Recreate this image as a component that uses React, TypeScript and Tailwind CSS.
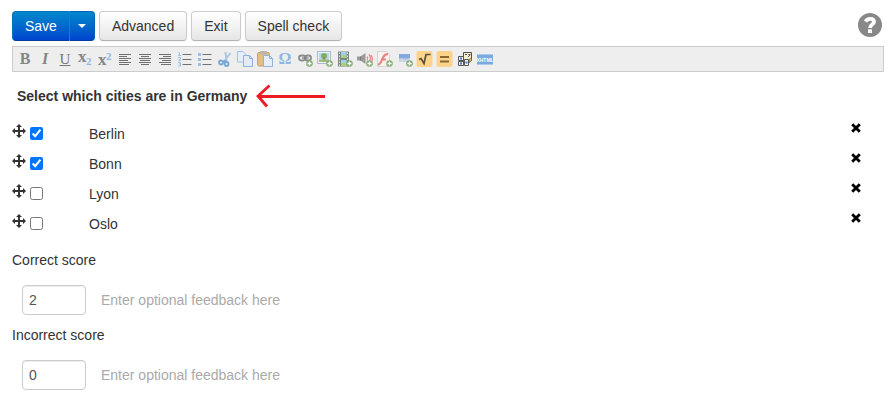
import { ReactNode } from 'react';

const cities = [
  { name: 'Berlin', correct: true },
  { name: 'Bonn', correct: true },
  { name: 'Lyon', correct: false },
  { name: 'Oslo', correct: false },
];

const scores = [
  { id: 'correct', label: 'Correct score', value: '2' },
  { id: 'incorrect', label: 'Incorrect score', value: '0' },
];

const Icon = ({ children }: { children: ReactNode }) => (
  <svg viewBox="0 0 16 16" width="16" height="16" fill="none" className="block overflow-visible">
    {children}
  </svg>
);

const Plus = () => (
  <g>
    <circle cx="12.5" cy="12.5" r="3.3" fill="#86ad70" />
    <path d="M10.5 12.5h4M12.5 10.5v4" stroke="#fff" strokeWidth="1.3" />
  </g>
);

const Glyph = ({ className, children }: { className: string; children: ReactNode }) => (
  <span className={`block w-4 text-center font-['Liberation_Serif',serif] leading-4 ${className}`}>{children}</span>
);

const Script = ({ baseY, markY }: { baseY: number; markY: number }) => (
  <Icon>
    <g fontFamily="Liberation Serif, serif" fontWeight="700">
      <text x="1" y={baseY} fontSize="17" fill="#858585">
        x
      </text>
      <text x="9" y={markY} fontSize="11" fill="#8fb7e6">
        2
      </text>
    </g>
  </Icon>
);

const Lines = ({ rows }: { rows: [number, number][] }) => (
  <Icon>
    {rows.map(([x, w], i) => (
      <rect key={i} x={x} y={3 + i * 2} width={w} height="1" fill="#707070" />
    ))}
  </Icon>
);

const tools: { label: string; icon: ReactNode }[] = [
  { label: 'Bold', icon: <Glyph className="text-[16px] font-bold text-[#858585]">B</Glyph> },
  { label: 'Italic', icon: <Glyph className="text-[16px] font-bold text-[#858585] italic">I</Glyph> },
  { label: 'Underline', icon: <Glyph className="text-[15px] text-[#757575] underline">U</Glyph> },
  { label: 'Subscript', icon: <Script baseY={11} markY={14} /> },
  { label: 'Superscript', icon: <Script baseY={14} markY={9} /> },
  { label: 'Align left', icon: <Lines rows={[[2, 12], [2, 8], [2, 12], [2, 9], [2, 12], [2, 10]]} /> },
  { label: 'Align center', icon: <Lines rows={[[2, 12], [4, 8], [2, 12], [3, 10], [2, 12], [4, 8]]} /> },
  { label: 'Align right', icon: <Lines rows={[[2, 12], [6, 8], [2, 12], [5, 9], [2, 12], [4, 10]]} /> },
  {
    label: 'Numbered list',
    icon: (
      <Icon>
        <path d="M1.5 1.5h1v3M1 4.5h3M1 6.5h2.5V8l-2 1.5H4M1 11.5h2.5V15H1M2 13h1.5" stroke="#9cc0ea" />
        <path d="M5.5 3.5h9M5.5 8.5h9M5.5 13.5h9" stroke="#707070" />
      </Icon>
    ),
  },
  {
    label: 'Bulleted list',
    icon: (
      <Icon>
        <path d="M1 2h3v3H1zM1 7h3v3H1zM1 12h3v3H1z" fill="#9cc0ea" />
        <path d="M5.5 3.5h9M5.5 8.5h9M5.5 13.5h9" stroke="#707070" />
      </Icon>
    ),
  },
  {
    label: 'Cut',
    icon: (
      <Icon>
        <path d="M8.5 1 9.5 10M13.5 2 7 10.5" stroke="#a9c9e0" strokeWidth="2" />
        <circle cx="4" cy="11.5" r="2" stroke="#76a7d0" strokeWidth="1.8" />
        <circle cx="9.5" cy="13" r="2" stroke="#76a7d0" strokeWidth="1.8" />
        <path d="M6 10.5 9.5 10" stroke="#76a7d0" strokeWidth="2" />
      </Icon>
    ),
  },
  {
    label: 'Copy',
    icon: (
      <Icon>
        <path d="M.5.5H6l3 3V11H.5z" fill="#e6eff9" stroke="#a3bfe2" />
        <path d="M6.5 4.500h6l3 3v8h-9z" fill="#e1ecf8" stroke="#8fb1dd" />
        <path d="M12.5 4.500v3h3" stroke="#8fb1dd" />
      </Icon>
    ),
  },
  {
    label: 'Paste',
    icon: (
      <Icon>
        <rect x=".5" y="1.5" width="12" height="13.5" rx="1.5" fill="#e3bd84" stroke="#cda268" />
        <rect x="3" y="0" width="7" height="3.5" rx="1" fill="#b9b4ac" />
        <path d="M6.5 4.500h6l3 3v8h-9z" fill="#e6eff9" stroke="#93b2da" />
        <path d="M12.5 4.500v3h3" stroke="#93b2da" />
      </Icon>
    ),
  },
  { label: 'Special character', icon: <Glyph className="text-[16px] font-bold text-[#8fb4e6]">Ω</Glyph> },
  {
    label: 'Link',
    icon: (
      <Icon>
        <rect x="2" y="4.5" width="6.5" height="5" rx="2.4" stroke="#8c8c8c" strokeWidth="1.8" />
        <rect x="8" y="4.5" width="6" height="5" rx="2.4" stroke="#8c8c8c" strokeWidth="1.8" />
        <path d="M5 7h6.5" stroke="#808080" strokeWidth="1.4" />
        <Plus />
      </Icon>
    ),
  },
  {
    label: 'Image',
    icon: (
      <Icon>
        <rect x=".5" y=".5" width="13" height="12" fill="#eef3f8" stroke="#a5bdd4" />
        <rect x="2" y="2" width="10" height="9" fill="#b8d8ee" />
        <path d="M2 8.5h10V11H2z" fill="#9fc07d" />
        <circle cx="7" cy="5" r="3" fill="#84ad63" />
        <path d="M7 6v3.5" stroke="#94744d" />
        <Plus />
      </Icon>
    ),
  },
  {
    label: 'Movie',
    icon: (
      <Icon>
        <path d="M1 .5h11v15H1z" fill="#7f8783" />
        <path d="M4 1h5.5v6H4zM4 9h5.5v6H4z" fill="#a0d2f0" />
        <path d="M4 5l2.5-2 3 3v1H4zM4 13l2.500-2 3 3v1H4z" fill="#a9d277" />
        <path d="M2.500 1.500v14M10.500 1.500v14" stroke="#e6e6e6" strokeDasharray="1.5 1.5" />
        <Plus />
      </Icon>
    ),
  },
  {
    label: 'Sound',
    icon: (
      <Icon>
        <path d="M0 5.500h3.500L8.500 2v11l-5-3.500H0z" fill="#999" />
        <path d="M3.500 5.500v4" stroke="#777" />
        <path d="M10 5.500q1.500 2 0 4M12 3.500q3 4 0 7M14 4q2 3.500 1 6" stroke="#ec8a8a" strokeWidth="1.3" />
        <Plus />
      </Icon>
    ),
  },
  {
    label: 'Flash',
    icon: (
      <Icon>
        <path d="M.5.5h9l3 3v12H.5z" fill="#f8f3f3" stroke="#d8d2d2" />
        <path d="M1 13.500C4 13.500 4.500 9 6 6.500S8 3 11 3M4.500 8.500H9" stroke="#e98383" strokeWidth="2.2" />
        <Plus />
      </Icon>
    ),
  },
  {
    label: 'Content item',
    icon: (
      <Icon>
        <path d="M2 3h11v8H2z" fill="#b9cdea" />
        <path d="M2 3h11v4.500H2z" fill="#85a9dc" />
        <path d="M2 9l3-2 3 2 5-2v4H2z" fill="#cbd6e4" />
        <Plus />
      </Icon>
    ),
  },
  {
    label: 'Equation',
    icon: (
      <Icon>
        <rect x="-.5" y="0" width="16" height="16" rx="2.5" fill="#fdd38c" />
        <path d="M2 8.500l2-1 3 5L9 3.500h4.500" stroke="#595033" strokeWidth="1.7" />
      </Icon>
    ),
  },
  {
    label: 'Inline equation',
    icon: (
      <Icon>
        <rect x="-.5" y="0" width="16" height="16" rx="2.5" fill="#fdd38c" />
        <path d="M3 6h9M3 10.500h9" stroke="#87672f" strokeWidth="2" />
      </Icon>
    ),
  },
  {
    label: 'Find',
    icon: (
      <Icon>
        <path d="M6.500 1.500h8v8l-3 2h-5z" fill="#f3eecb" stroke="#4d4d4d" />
        <path d="M8 3.500h2M11.500 3.500h2M11 6l2-2" stroke="#4d4d4d" />
        <path d="M1.500 5.500h5v4h-5zM1.500 10.500h5v4h-5zM7.500 8.500h4v6h-4z" fill="#f7f7f7" stroke="#555" />
        <path d="M3 6.500h2v2H3zM3 11.500h2v2H3zM8.500 10.500h2v2h-2z" fill="#4a72c8" />
        <path d="M12 8.500l2.500-2v3l-2.500 2z" fill="#dfc35b" stroke="#4d4d4d" strokeWidth=".6" />
      </Icon>
    ),
  },
  {
    label: 'Edit source',
    icon: (
      <Icon>
        <rect x="0" y="3" width="16" height="11" fill="#a9c9ee" />
        <rect x="0" y="4" width="16" height="9" fill="#7da9de" />
        <text
          x="8"
          y="11"
          fontSize="5"
          fontWeight="700"
          textAnchor="middle"
          fontFamily="Liberation Sans, sans-serif"
          fill="#fff"
        >
          XHTML
        </text>
      </Icon>
    ),
  },
];

const HelpIcon = () => (
  <svg width="24" height="24" viewBox="0 0 24 24" fill="none" className="block">
    <circle cx="12" cy="12" r="12" fill="#888" />
    <path d="M7.5 8.500C8.500 6.700 10 5.800 12 5.800c2.500 0 4 1.200 4 3 0 2.700-4 2.800-4 6.200" stroke="#fff" strokeWidth="3.800" />
    <path d="M10 16.300h4V20h-4z" fill="#fff" />
  </svg>
);

const MoveIcon = () => (
  <svg width="14" height="14" viewBox="0 0 14 14" className="block" fill="currentColor">
    <path d="M6 2h2v10H6zM2 6h10v2H2z" />
    <path d="M7 0l3 3H4zM7 14l3-3H4zM0 7l3-3v6zM14 7l-3-3v6z" />
  </svg>
);

const RemoveIcon = () => (
  <svg width="10" height="10" viewBox="0 0 10 10" className="block" stroke="currentColor" strokeWidth="2.8">
    <path d="M1.200 1.200l7.600 7.600M8.800 1.200L1.200 8.800" />
  </svg>
);

const ToolbarButton = ({ children }: { children: ReactNode }) => (
  <button
    type="button"
    className="rounded border border-[#ccc] border-b-[#b3b3b3] bg-linear-to-b from-white to-[#e6e6e6] px-3 py-1 leading-5 shadow-[0_1px_2px_rgba(0,0,0,0.05)]"
  >
    {children}
  </button>
);

const App = () => {
  return (
    <main className="bg-white pt-[11px] pr-[5px] pb-[11px] pl-3 font-['Liberation_Sans',Arial,sans-serif] text-sm text-[#333]">
      <header className="flex items-start justify-between">
        <div className="flex gap-1">
          <div className="flex text-white [text-shadow:0_-1px_0_rgba(0,0,0,0.25)]">
            <button
              type="button"
              className="rounded-l border border-r-0 border-[#0074b8] border-b-[#003ca0] bg-linear-to-b from-[#0088cc] to-[#0044cc] px-3 py-1 leading-5"
            >
              Save
            </button>
            <button
              type="button"
              aria-label="More save options"
              className="rounded-r border border-[#0060b8] border-b-[#003ca0] border-l-[#1a7ad0] bg-linear-to-b from-[#0088cc] to-[#0044cc] px-2"
            >
              <span className="block border-x-4 border-t-4 border-x-transparent border-t-white" />
            </button>
          </div>
          <ToolbarButton>Advanced</ToolbarButton>
          <ToolbarButton>Exit</ToolbarButton>
          <ToolbarButton>Spell check</ToolbarButton>
        </div>
        <button type="button" aria-label="Help" className="pt-0.5 pr-0.5">
          <HelpIcon />
        </button>
      </header>

      <div className="mt-[5px] flex flex-wrap gap-1 border border-[#ccc] bg-[#eee] p-1">
        {tools.map((tool) => (
          <button key={tool.label} type="button" aria-label={tool.label} className="h-4 w-4">
            {tool.icon}
          </button>
        ))}
      </div>

      <div className="mt-[14px] flex items-center gap-2 pl-[5px]">
        <h1 className="leading-5 font-bold">Select which cities are in Germany</h1>
        <svg width="70" height="24" viewBox="0 0 70 24" fill="none" className="-my-0.5">
          <path d="M70 12.500H3M14.500 1.500 3 12 12 22.500" stroke="#ed1c24" strokeWidth="2.8" />
        </svg>
      </div>

      <ul className="mt-[13px]">
        {cities.map((city) => (
          <li key={city.name} className="flex h-[30px] items-start">
            <button type="button" aria-label={`Move ${city.name}`} className="pt-[5px]">
              <MoveIcon />
            </button>
            <input id={city.name} type="checkbox" defaultChecked={city.correct} className="mt-2 ml-1 h-[13px] w-[13px]" />
            <label htmlFor={city.name} className="ml-[46px] grow pt-[5px] leading-5">
              {city.name}
            </label>
            <button type="button" aria-label={`Delete ${city.name}`} className="mr-[23px] pt-1 text-black">
              <RemoveIcon />
            </button>
          </li>
        ))}
      </ul>

      <div className="mt-[11px] flex flex-col gap-[10px]">
        {scores.map((score) => (
          <section key={score.id}>
            <label htmlFor={score.id} className="block leading-5">
              {score.label}
            </label>
            <div className="mt-[15px] flex gap-[15px] pl-[10px]">
              <input
                id={score.id}
                type="text"
                defaultValue={score.value}
                className="h-[30px] w-16 rounded border border-[#ccc] px-1.5 text-[#555] shadow-[inset_0_1px_1px_rgba(0,0,0,0.075)]"
              />
              <input
                type="text"
                aria-label={`${score.label} feedback`}
                placeholder="Enter optional feedback here"
                className="grow placeholder:text-[#aaa]"
              />
            </div>
          </section>
        ))}
      </div>
    </main>
  );
};

export default App;
